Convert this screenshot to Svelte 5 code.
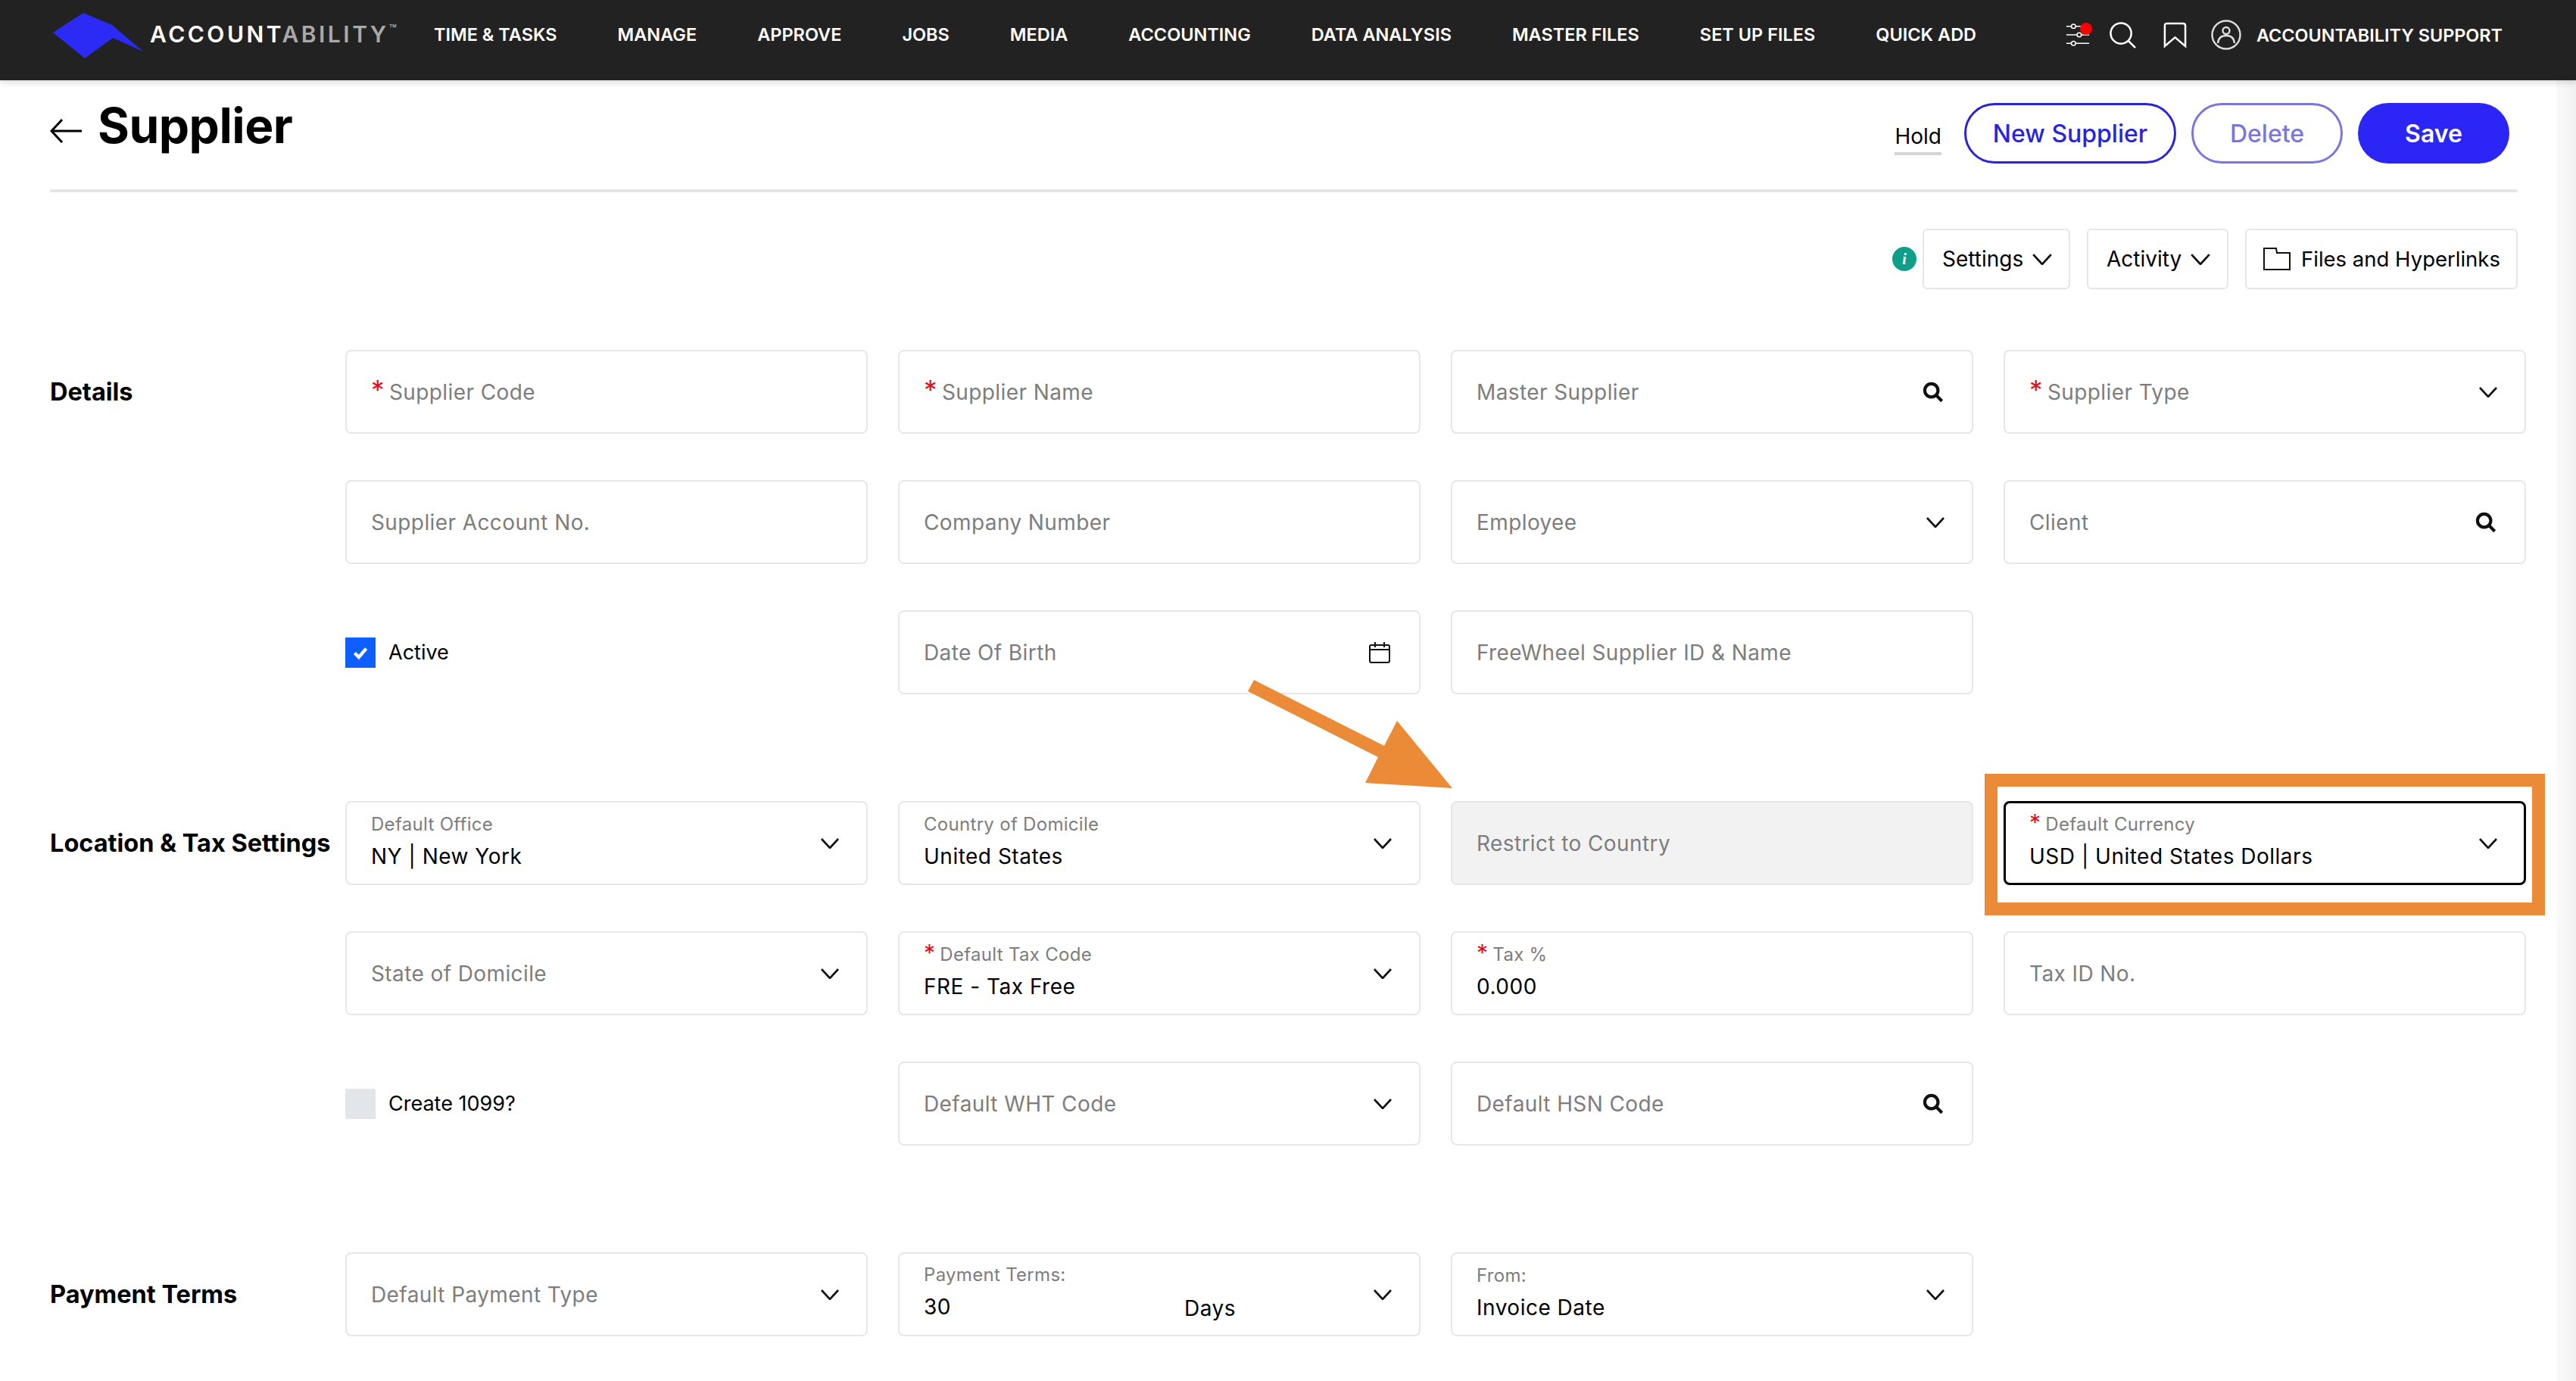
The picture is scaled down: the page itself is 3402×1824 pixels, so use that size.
<script>
  const nav = ['TIME & TASKS','MANAGE','APPROVE','JOBS','MEDIA','ACCOUNTING','DATA ANALYSIS','MASTER FILES','SET UP FILES','QUICK ADD'];
  const sections = [
    { title: 'Details', cells: [
      { ph: 'Supplier Code', req: true },
      { ph: 'Supplier Name', req: true },
      { ph: 'Master Supplier', icon: 'search' },
      { ph: 'Supplier Type', req: true, icon: 'chev' },
      { ph: 'Supplier Account No.' },
      { ph: 'Company Number' },
      { ph: 'Employee', icon: 'chev' },
      { ph: 'Client', icon: 'search' },
      { check: 'Active', on: true },
      { ph: 'Date Of Birth', icon: 'cal' },
      { ph: 'FreeWheel Supplier ID & Name' },
    ]},
    { title: 'Location & Tax Settings', cells: [
      { label: 'Default Office', value: 'NY | New York', icon: 'chev' },
      { label: 'Country of Domicile', value: 'United States', icon: 'chev' },
      { ph: 'Restrict to Country', disabled: true },
      { label: 'Default Currency', value: 'USD | United States Dollars', req: true, icon: 'chev', focus: true },
      { ph: 'State of Domicile', icon: 'chev' },
      { label: 'Default Tax Code', value: 'FRE - Tax Free', req: true, icon: 'chev' },
      { label: 'Tax %', value: '0.000', req: true },
      { ph: 'Tax ID No.' },
      { check: 'Create 1099?', on: false },
      { ph: 'Default WHT Code', icon: 'chev' },
      { ph: 'Default HSN Code', icon: 'search' },
    ]},
    { title: 'Payment Terms', cells: [
      { ph: 'Default Payment Type', icon: 'chev' },
      { label: 'Payment Terms:', value: '30', suffix: 'Days', icon: 'chev' },
      { label: 'From:', value: 'Invoice Date', icon: 'chev' },
    ]},
  ];
</script>

{#snippet chev()}
  <svg class="chev" viewBox="0 0 24 14" fill="none" stroke="#111" stroke-width="2.6"><path d="M1 1l11 12L23 1"/></svg>
{/snippet}

<div class="page">
  <header class="nav">
    <div class="brand">
      <svg class="logo" viewBox="0 0 120 60"><path d="M40 0L78 16L119 51L79 33L42 60L0 26Z" fill="#2b2bf5"/></svg>
      <span class="word">ACCOUNT<span class="dim">ABILITY</span><sup>™</sup></span>
    </div>
    <nav class="links">
      {#each nav as n}<span>{n}</span>{/each}
    </nav>
    <div class="tools">
      <span class="sliders">
        <svg viewBox="0 0 34 34" fill="none" stroke="#fff" stroke-width="1.6">
          <path d="M1 5h7M14 5h19M1 17h15M22 17h11M1 29h7M14 29h19"/>
          <circle cx="11" cy="5" r="3"/><circle cx="19" cy="17" r="3"/><circle cx="11" cy="29" r="3"/>
        </svg>
        <i class="dot"></i>
      </span>
      <svg class="ic-search" viewBox="0 0 36 36" fill="none" stroke="#fff" stroke-width="2.6"><circle cx="15.500" cy="15.500" r="14"/><path d="M25.500 25.500L35 35"/></svg>
      <svg class="ic-book" viewBox="0 0 32 36" fill="none" stroke="#fff" stroke-width="2.6"><path d="M2 33V5q0-3 3-3h22q3 0 3 3v28L16 21Z"/></svg>
      <svg class="ic-user" viewBox="0 0 40 40" fill="none" stroke="#ddd" stroke-width="2.4"><circle cx="20" cy="20" r="18.500"/><circle cx="20" cy="14.500" r="4.500"/><path d="M9 31q1-10 11-10t11 10"/></svg>
      <span class="support">ACCOUNTABILITY SUPPORT</span>
    </div>
  </header>

  <main class="main">
    <div class="titlebar">
      <div class="title">
        <svg viewBox="0 0 42 32" fill="none" stroke="#000" stroke-width="3"><path d="M16 1L2 16l14 15M2 16h40"/></svg>
        <h1>Supplier</h1>
      </div>
      <div class="actions">
        <span class="hold">Hold</span>
        <button class="btn outline">New Supplier</button>
        <button class="btn faded">Delete</button>
        <button class="btn solid">Save</button>
      </div>
    </div>

    <div class="toolbar">
      <span class="info">i</span>
      <div class="tool t-settings">Settings {@render chev()}</div>
      <div class="tool t-activity">Activity {@render chev()}</div>
      <div class="tool t-files">
        <svg viewBox="0 0 36 32" fill="none" stroke="#111" stroke-width="2"><path d="M1 30V2h16l1 6h17v22Z"/></svg>
        Files and Hyperlinks
      </div>
    </div>

    {#each sections as s}
      <section class="section">
        <h2>{s.title}</h2>
        <div class="grid">
          {#each s.cells as c}
            {#if c.check}
              <label class="check">
                <span class="box" class:on={c.on}>
                  {#if c.on}<svg viewBox="0 0 24 24" fill="none" stroke="#fff" stroke-width="4"><path d="M5 12.500l5 5L19 7"/></svg>{/if}
                </span>
                {c.check}
              </label>
            {:else}
              <div class="field" class:disabled={c.disabled} class:focus={c.focus}>
                <div class="body">
                  {#if c.label}
                    <div class="label">{#if c.req}<b>*</b>{/if}{c.label}</div>
                    <div class="value"><span class:v={c.suffix}>{c.value}</span>{#if c.suffix}<span class="suffix">{c.suffix}</span>{/if}</div>
                  {:else}
                    <div class="ph">{#if c.req}<b>*</b>{/if}{c.ph}</div>
                  {/if}
                </div>
                {#if c.icon === 'chev'}{@render chev()}{/if}
                {#if c.icon === 'search'}
                  <svg class="mini" viewBox="0 0 24 24" fill="none" stroke="#111" stroke-width="3.600"><circle cx="10" cy="10" r="7.500"/><path d="M15.500 15.500L22 22"/></svg>
                {/if}
                {#if c.icon === 'cal'}
                  <svg class="mini cal" viewBox="0 0 28 28" fill="none" stroke="#111" stroke-width="2"><rect x="1" y="4" width="26" height="23" rx="2"/><path d="M1 10h26M8 0v7M20 0v7"/></svg>
                {/if}
              </div>
            {/if}
          {/each}
        </div>
      </section>
    {/each}

    <svg class="arrow" viewBox="0 0 272 145"><path d="M8 0L0 15L172 102L155 136L270 143L197 54L180 87Z" fill="#ec8b37"/></svg>
    <div class="mark"></div>
  </main>
  <div class="gutter"></div>
</div>

<style>
  :global(body) { margin: 0; background: #fff; font-family: Inter, "Liberation Sans", sans-serif; color: #000; }
  .page { position: relative; width: 3402px; height: 1824px; overflow: hidden; }
  .nav { height: 106px; background: #222; color: #fff; display: flex; align-items: flex-start; box-shadow: 0 3px 8px rgba(0,0,0,.15); position: relative; z-index: 2; }
  .brand { display: flex; align-items: flex-start; width: 573px; flex: none; padding: 17px 0 0 70px; box-sizing: border-box; }
  .logo { width: 120px; height: 60px; flex: none; }
  .word { font-size: 30px; font-weight: 600; letter-spacing: 3.500px; margin: 10px 0 0 8px; line-height: 36px; white-space: nowrap; }
  .dim { color: #a9a9a9; }
  .word sup { font-size: 16px; color: #a9a9a9; letter-spacing: 0; vertical-align: 12px; line-height: 0; }
  .links { display: flex; gap: 80px; font-size: 23.500px; font-weight: 600; line-height: 92px; white-space: nowrap; flex: none; }
  .tools { margin-left: auto; padding-right: 97px; display: flex; align-items: center; height: 92px; }
  .sliders { position: relative; width: 32px; height: 32px; display: block; }
  .sliders svg { width: 32px; height: 32px; display: block; }
  .dot { position: absolute; left: 19px; top: 0; width: 16px; height: 16px; border-radius: 50%; background: #f00; }
  .ic-search { width: 35px; height: 35px; margin-left: 26px; }
  .ic-book { width: 31px; height: 35px; margin-left: 36px; }
  .ic-user { width: 40px; height: 40px; margin-left: 32px; }
  .support { font-size: 23.400px; font-weight: 600; margin-left: 20px; white-space: nowrap; }

  .main { position: relative; width: 3402px; }
  .titlebar { margin: 0 77px 0 66px; height: 144px; border-bottom: 4px solid #e4e6e9; display: flex; justify-content: space-between; box-sizing: content-box; }
  .title { display: flex; align-items: flex-start; }
  .title svg { width: 42px; height: 32px; margin-top: 51px; flex: none; }
  .title h1 { margin: 22px 0 0 21px; font-size: 64px; line-height: 76px; font-weight: 700; letter-spacing: -0.5px; }
  .actions { display: flex; align-items: flex-start; margin-right: 11px; padding-top: 30px; }
  .hold { font-size: 28px; line-height: 36px; margin-top: 26px; border-bottom: 4px solid #d5d5d5; padding-bottom: 3px; margin-right: 30px; }
  .btn { height: 80px; border-radius: 40px; font: 500 32px Inter, sans-serif; background: #fff; box-sizing: border-box; margin-right: 20px; padding: 0; }
  .btn:last-child { margin-right: 0; }
  .outline { width: 280px; color: #2a24d8; border: 3px solid #2a24d8; }
  .faded { width: 200px; color: #7b76dd; border: 3px solid #7b76dd; }
  .solid { width: 200px; background: #2b26f5; color: #fff; border: none; font-weight: 600; }

  .toolbar { margin: 48px 77px 0 0; display: flex; justify-content: flex-end; align-items: center; height: 80px; }
  .info { width: 32px; height: 32px; border-radius: 50%; background: #0e9f8a; color: #fff; font: italic 700 20px/32px "Liberation Serif", serif; text-align: center; margin-right: 8px; }
  .tool { height: 80px; box-sizing: border-box; border: 2px solid #e4e6e9; border-radius: 6px; display: flex; align-items: center; font-size: 28px; padding: 0 24px; white-space: nowrap; }
  .tool .chev { margin-left: 12px; margin-right: 0; width: 26px; height: 15px; }
  .t-settings { width: 195px; margin-right: 22px; }
  .t-activity { width: 187px; margin-right: 22px; }
  .t-files { width: 360px; padding: 0 22px; font-size: 27.500px; }
  .t-files svg { width: 36px; height: 32px; margin-right: 14px; flex: none; }

  .section { display: grid; grid-template-columns: 390px 2880px; margin: 0 0 141px 66px; }
  .toolbar + .section { margin-top: 80px; }
  h2 { margin: 0; height: 111px; display: flex; align-items: center; font-size: 32.500px; font-weight: 700; white-space: nowrap; }
  .grid { display: grid; grid-template-columns: repeat(4, 690px); column-gap: 40px; row-gap: 61px; }
  .field { height: 111px; box-sizing: border-box; border: 2px solid #e6e7e9; border-radius: 8px; display: flex; align-items: center; padding: 0 32px; background: #fff; }
  .field.disabled { background: #f2f2f2; }
  .field.focus { border: 3px solid #000; padding: 0 31px; }
  .body { flex: 1; min-width: 0; }
  .ph { font-size: 28px; color: #7d7d7d; line-height: 36px; letter-spacing: 0.400px; }
  .ph b, .label b { color: #e0101a; font-weight: 400; font-size: 1.25em; line-height: 0; margin-right: 6px; }
  .label { font-size: 24px; color: #7d7d7d; line-height: 28px; letter-spacing: 0.300px; margin-top: -3px; }
  .value { font-size: 28px; line-height: 36px; margin-top: 10px; display: flex; letter-spacing: 0.500px; }
  .v { width: 344px; flex: none; }
  .suffix { margin-top: 2px; }
  .chev { width: 24px; height: 14px; flex: none; margin-right: 4px; }
  .mini { width: 28px; height: 28px; flex: none; margin-right: 5px; }
  .cal { width: 28px; height: 28px; margin-right: 6px; }
  .check { display: flex; align-items: center; font-size: 27px; height: 111px; }
  .box { width: 40px; height: 40px; background: #e2e5e9; display: flex; align-items: center; justify-content: center; margin-right: 17px; }
  .box.on { background: #0d5fff; }
  .box svg { width: 26px; height: 26px; }

  .arrow { position: absolute; left: 1648px; top: 792px; width: 272px; height: 145px; }
  .mark { position: absolute; left: 2621px; top: 916px; width: 740px; height: 187px; box-sizing: border-box; border: 17px solid #ec8b37; }
  .gutter { position: absolute; right: 0; top: 106px; bottom: 0; width: 26px; background: linear-gradient(90deg, #fafafa, #f1f1f1); }
</style>
